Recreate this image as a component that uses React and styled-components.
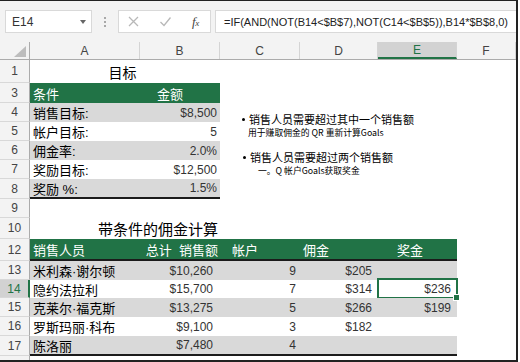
import React from 'react';
import styled, { createGlobalStyle, css } from 'styled-components';

const Global = createGlobalStyle`
  html, body { margin: 0; padding: 0; background: #fff; }
  body { font-family: "Liberation Sans", "Noto Sans CJK SC", sans-serif; }
`;

const GREEN = '#217346';
const W = { A: 110, B: 80, C: 80, D: 78, E: 79, F: 59 };

const Frame = styled.div`
  width: 518px;
  height: 362px;
  box-sizing: border-box;
  border-top: 1px solid #222;
  border-right: 2px solid #222;
  border-bottom: 2px solid #222;
  display: flex;
  flex-direction: column;
  overflow: hidden;
  position: relative;
  background: #fff;
`;

const Toolbar = styled.div`
  height: 41px;
  flex: none;
  background: #f3f3f3;
  display: flex;
  align-items: center;
  padding-left: 5px;
`;

const NameBox = styled.div`
  width: 87px;
  height: 23px;
  box-sizing: border-box;
  background: #fff;
  border: 1px solid #d9d9d9;
  display: flex;
  align-items: center;
  justify-content: space-between;
  padding: 0 5px 0 6px;
  font: 12px "Liberation Sans", sans-serif;
  color: #333;
`;

const Caret = styled.span`
  width: 0;
  height: 0;
  border-left: 3.5px solid transparent;
  border-right: 3.5px solid transparent;
  border-top: 4px solid #666;
`;

const Grip = styled.div`
  margin: 0 12px 0 12px;
  display: flex;
  flex-direction: column;
  gap: 2px;
`;

const GripDot = styled.span`
  width: 2px;
  height: 2px;
  background: #a8a8a8;
`;

const FuncGroup = styled.div`
  width: 93px;
  height: 23px;
  box-sizing: border-box;
  background: #fff;
  border: 1px solid #d9d9d9;
  display: flex;
  align-items: center;
  padding-left: 9px;
  gap: 21px;
`;

const FxLabel = styled.span`
  font: italic 13px "Liberation Serif", serif;
  color: #444;
  width: 11px;
  letter-spacing: -0.5px;
`;

const FxSub = styled.span`
  font-size: 9px;
`;

const FormulaBox = styled.div`
  margin-left: 4px;
  flex: 1;
  height: 23px;
  box-sizing: border-box;
  background: #fff;
  border: 1px solid #d9d9d9;
  border-right: none;
  display: flex;
  align-items: center;
  padding-left: 8px;
  font: 11px "Liberation Sans", sans-serif;
  color: #222;
  white-space: nowrap;
  overflow: hidden;
`;

const ColBar = styled.div`
  height: 18px;
  flex: none;
  display: flex;
  background: #f3f3f3;
  border-bottom: 1px solid #ababab;
  box-sizing: border-box;
`;

const Corner = styled.div`
  width: 30px;
  flex: none;
  box-sizing: border-box;
  border-right: 1px solid #ababab;
  display: flex;
  align-items: flex-end;
  justify-content: flex-end;
  padding: 0 3px 2px 0;
`;

const ColHead = styled.div`
  width: ${p => p.$w}px;
  flex: none;
  box-sizing: border-box;
  border-right: 1px solid #d4d4d4;
  display: flex;
  align-items: center;
  justify-content: center;
  font: 12px "Liberation Sans", sans-serif;
  color: #444;
  ${p => p.$active && css`
    background: #d2d2d2;
    color: ${GREEN};
    border-bottom: 2px solid ${GREEN};
  `}
`;

const Row = styled.div`
  height: ${p => p.$h}px;
  flex: none;
  display: flex;
`;

const RowHead = styled.div`
  width: 30px;
  flex: none;
  box-sizing: border-box;
  background: #f3f3f3;
  border-right: 1px solid #ababab;
  border-bottom: 1px solid #d8d8d8;
  display: flex;
  align-items: center;
  justify-content: center;
  font: 12px "Liberation Sans", sans-serif;
  color: #444;
  ${p => p.$active && css`
    background: #d2d2d2;
    color: ${GREEN};
    border-right: 2px solid ${GREEN};
  `}
`;

const Cell = styled.div`
  width: ${p => p.$w}px;
  flex: none;
  box-sizing: border-box;
  height: 100%;
  display: flex;
  align-items: center;
  justify-content: ${p => (p.$align === 'right' ? 'flex-end' : p.$align === 'center' ? 'center' : 'flex-start')};
  padding: 0 ${p => p.$pr ?? 3}px 0 ${p => p.$pl ?? 3}px;
  background: ${p => (p.$tone === 'head' ? GREEN : p.$tone === 'band' ? '#d9d9d9' : 'transparent')};
  color: ${p => (p.$tone === 'head' ? '#fff' : '#000')};
  border-bottom: ${p => (p.$rule ? '2px solid #1b1b1b' : 'none')};
  font-size: 13px;
  white-space: nowrap;
  position: relative;
  ${p => p.$selected && css`
    &::after {
      content: '';
      position: absolute;
      left: -1px;
      top: -2px;
      right: -1px;
      bottom: -1px;
      border: 2px solid ${GREEN};
    }
    &::before {
      content: '';
      position: absolute;
      right: -3px;
      bottom: -3px;
      width: 5px;
      height: 5px;
      background: ${GREEN};
      border: 1px solid #fff;
      z-index: 2;
    }
  `}
`;

const Title = styled.span`
  font-size: ${p => p.$size}px;
  color: #000;
`;

const Num = styled.span`
  font: 12px "Liberation Sans", sans-serif;
  color: #333;
`;

const Note = styled.div`
  position: absolute;
  left: 242px;
  top: 111px;
  font-family: "Noto Sans CJK SC", sans-serif;
  color: #000;
`;

const NoteItem = styled.div`
  margin-top: ${p => p.$gap}px;
`;

const NoteLine = styled.div`
  height: 14px;
  line-height: 12px;
  font-size: ${p => p.$size}px;
  padding-left: ${p => p.$indent}px;
  white-space: nowrap;
  display: flex;
  align-items: center;
`;

const Bullet = styled.span`
  flex: none;
  width: 3px;
  height: 3px;
  border-radius: 50%;
  background: #000;
  margin-right: 4px;
`;

const goals = [
  ['4', '销售目标:', '$8,500', true],
  ['5', '帐户目标:', '5', false],
  ['6', '佣金率:', '2.0%', true],
  ['7', '奖励目标:', '$12,500', false],
  ['8', '奖励 %:', '1.5%', true],
];

const people = [
  ['13', '米利森·谢尔顿', '$10,260', '9', '$205', '', true],
  ['14', '隐约法拉利', '$15,700', '7', '$314', '$236', false],
  ['15', '克莱尔·福克斯', '$13,275', '5', '$266', '$199', true],
  ['16', '罗斯玛丽·科布', '$9,100', '3', '$182', '', false],
  ['17', '陈洛丽', '$7,480', '4', '', '', true],
];

const Empty = ({ cols }) => cols.map(c => <Cell key={c} $w={W[c]} />);

export default function App() {
  return (
    <>
      <Global />
      <Frame>
        <Toolbar>
          <NameBox>
            E14
            <Caret />
          </NameBox>
          <Grip>
            <GripDot />
            <GripDot />
            <GripDot />
          </Grip>
          <FuncGroup>
            <svg width="11" height="11" viewBox="0 0 11 11">
              <path d="M1 1 L10 10 M10 1 L1 10" stroke="#b8b8b8" strokeWidth="1.3" fill="none" />
            </svg>
            <svg width="11" height="11" viewBox="0 0 11 11">
              <path d="M0.5 6 L4 9.5 L10.5 1.5" stroke="#b8b8b8" strokeWidth="1.3" fill="none" />
            </svg>
            <FxLabel>
              f<FxSub>x</FxSub>
            </FxLabel>
          </FuncGroup>
          <FormulaBox>=IF(AND(NOT(B14&lt;$B$7),NOT(C14&lt;$B$5)),B14*$B$8,0)</FormulaBox>
        </Toolbar>

        <ColBar>
          <Corner>
            <svg width="12" height="11" viewBox="0 0 12 11">
              <path d="M12 0 L12 11 L0 11 Z" fill="#bdbdbd" />
            </svg>
          </Corner>
          {['A', 'B', 'C', 'D', 'E', 'F'].map(c => (
            <ColHead key={c} $w={W[c]} $active={c === 'E'}>
              {c}
            </ColHead>
          ))}
        </ColBar>

        <Row $h={23}>
          <RowHead>1</RowHead>
          <Cell $w={W.A + W.B} $align="center" $pr={8}>
            <Title $size={14}>目标</Title>
          </Cell>
          <Empty cols={['C', 'D', 'E', 'F']} />
        </Row>

        <Row $h={20}>
          <RowHead>3</RowHead>
          <Cell $w={W.A} $tone="head">条件</Cell>
          <Cell $w={W.B} $tone="head" $pl={17}>金额</Cell>
          <Empty cols={['C', 'D', 'E', 'F']} />
        </Row>

        {goals.map(([n, label, val, band], i) => (
          <Row key={n} $h={i === goals.length - 1 ? 20 : 19}>
            <RowHead>{n}</RowHead>
            <Cell $w={W.A} $tone={band ? 'band' : ''} $rule={i === goals.length - 1}>
              {label}
            </Cell>
            <Cell $w={W.B} $tone={band ? 'band' : ''} $align="right" $pr={3} $rule={i === goals.length - 1}>
              <Num>{val}</Num>
            </Cell>
            <Empty cols={['C', 'D', 'E', 'F']} />
          </Row>
        ))}

        <Row $h={19}>
          <RowHead>9</RowHead>
          <Empty cols={['A', 'B', 'C', 'D', 'E', 'F']} />
        </Row>

        <Row $h={21}>
          <RowHead>10</RowHead>
          <Cell $w={W.A + W.B + W.C} $pl={68}>
            <Title $size={15}>带条件的佣金计算</Title>
          </Cell>
          <Empty cols={['D', 'E', 'F']} />
        </Row>

        <Row $h={22}>
          <RowHead>12</RowHead>
          <Cell $w={W.A} $tone="head" $rule>销售人员</Cell>
          <Cell $w={W.B} $tone="head" $align="right" $pr={2} $rule>总计&nbsp;&nbsp;销售额</Cell>
          <Cell $w={W.C} $tone="head" $pl={12} $rule>帐户</Cell>
          <Cell $w={W.D} $tone="head" $pl={3} $rule>佣金</Cell>
          <Cell $w={W.E} $tone="head" $pl={19} $rule>奖金</Cell>
          <Empty cols={['F']} />
        </Row>

        {people.map(([n, name, sales, acc, com, bonus, band], i) => {
          const last = i === people.length - 1;
          const tone = band ? 'band' : '';
          return (
            <Row key={n} $h={last ? 20 : n === '14' ? 18 : 19}>
              <RowHead $active={n === '14'}>{n}</RowHead>
              <Cell $w={W.A} $tone={tone} $rule={last}>{name}</Cell>
              <Cell $w={W.B} $tone={tone} $align="right" $pr={7} $rule={last}>
                <Num>{sales}</Num>
              </Cell>
              <Cell $w={W.C} $tone={tone} $align="right" $pr={4} $rule={last}>
                <Num>{acc}</Num>
              </Cell>
              <Cell $w={W.D} $tone={tone} $align="right" $pr={6} $rule={last}>
                <Num>{com}</Num>
              </Cell>
              <Cell $w={W.E} $tone={tone} $align="right" $pr={6} $rule={last} $selected={n === '14'}>
                <Num>{bonus}</Num>
              </Cell>
              <Empty cols={['F']} />
            </Row>
          );
        })}

        <Row $h={19}>
          <RowHead>18</RowHead>
          <Empty cols={['A', 'B', 'C', 'D', 'E', 'F']} />
        </Row>

        <Note>
          <NoteItem $gap={0}>
            <NoteLine $size={11} $indent={0}>
              <Bullet />销售人员需要超过其中一个销售额
            </NoteLine>
            <NoteLine $size={8.8} $indent={6}>用于赚取佣金的 QR 重新计算Goals</NoteLine>
          </NoteItem>
          <NoteItem $gap={10}>
            <NoteLine $size={11} $indent={1}>
              <Bullet />销售人员需要超过两个销售额
            </NoteLine>
            <NoteLine $size={8.8} $indent={16}>一。Q 帐户Goals获取奖金</NoteLine>
          </NoteItem>
        </Note>
      </Frame>
    </>
  );
}
